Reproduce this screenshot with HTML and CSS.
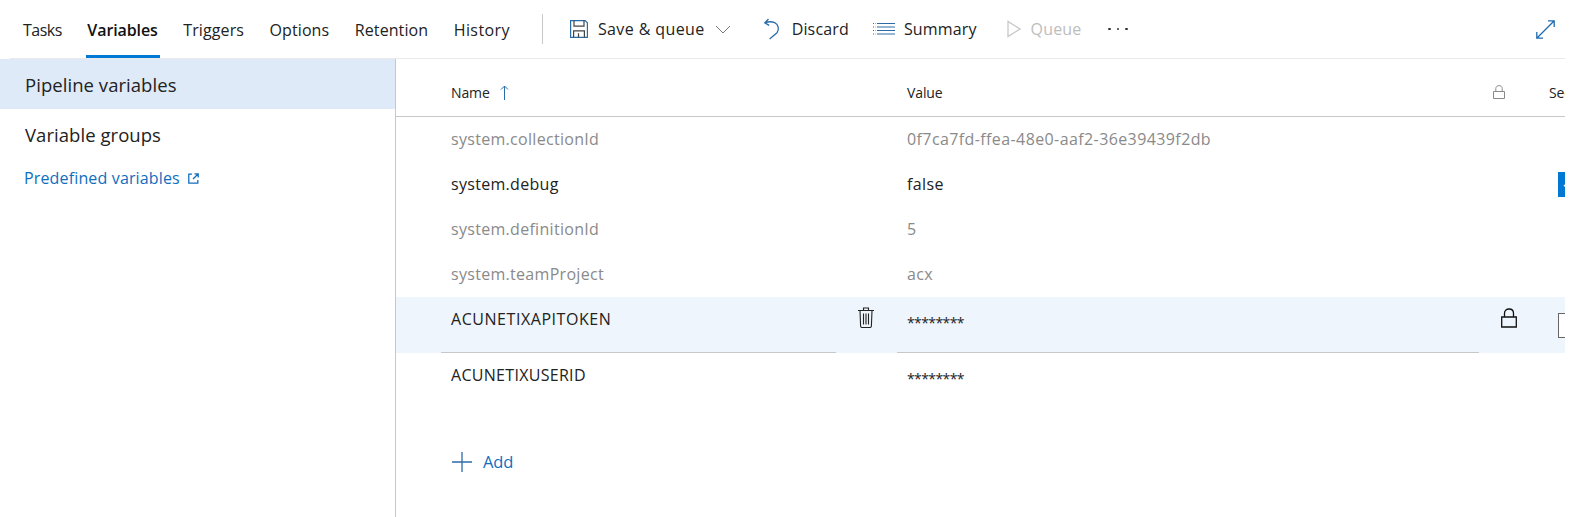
FILE: index.html
```html
<!DOCTYPE html>
<html lang="en">
<head>
<meta charset="utf-8">
<title>Variables</title>
<link rel="stylesheet" href="styles.css">
</head>
<body>
<div class="app">
  <header class="toolbar">
    <nav class="tabs">
      <a class="tab tasks">Tasks</a>
      <a class="tab active">Variables</a>
      <a class="tab">Triggers</a>
      <a class="tab">Options</a>
      <a class="tab">Retention</a>
      <a class="tab history">History</a>
    </nav>
    <div class="sep"></div>
    <div class="cmds">
      <button class="cmd save">
        <svg class="ic" width="20" height="20" viewBox="0 0 20 20" fill="none" stroke="#2b6ca8" stroke-width="1.2"><path d="M1.6 1.6h14.6l2.2 2.2v14.6H1.6z"/><path d="M5 1.6v5.600h10V1.600" stroke="#444"/><path d="M4.600 18.400v-6.600h10.800v6.600M9.500 14.200v4.200" stroke="#444"/></svg>
        <span>Save &amp; queue</span>
        <svg class="chev" width="16" height="9" viewBox="0 0 16 9" fill="none" stroke="#777" stroke-width="1"><path d="M1 1l7 7 7-7"/></svg>
      </button>
      <button class="cmd discard">
        <svg class="ic" width="18" height="22" viewBox="0 0 18 22" fill="none" stroke="#2b6ca8" stroke-width="1.3"><path d="M5.500 1L1.800 4.800l4.400 2.600M2 4.900c3-1.300 7-1.400 9.600-.2 4 1.900 4.800 6.600 2.400 10L6.600 21"/></svg>
        <span>Discard</span>
      </button>
      <button class="cmd summary">
        <svg class="ic" width="22" height="16" viewBox="0 0 22 16" fill="none" stroke="#2b6ca8" stroke-width="1.2"><path d="M4 2.500h18M4 6h18M4 9.500h18M4 13h18"/><path d="M0 2.500h2.500M0 6h2.500M0 9.500h2.500M0 13h2.500" stroke-dasharray="1 1"/></svg>
        <span>Summary</span>
      </button>
      <button class="cmd queue">
        <svg class="ic" width="14" height="18" viewBox="0 0 14 18" fill="none" stroke="#c8c8c8" stroke-width="1.3"><path d="M1 1.500v15L13 9z"/></svg>
        <span>Queue</span>
      </button>
      <button class="cmd more" aria-label="More">
        <span class="dot"></span><span class="dot"></span><span class="dot"></span>
      </button>
    </div>
    <button class="expand" aria-label="Expand">
      <svg width="19" height="19" viewBox="0 0 19 19" fill="none" stroke="#1f6bb0" stroke-width="1.300"><path d="M1 18L18 1M12 .8h6.200V7M.8 12v6.200H7"/></svg>
    </button>
  </header>

  <div class="main">
    <aside class="side">
      <div class="side-item selected">Pipeline variables</div>
      <div class="side-item">Variable groups</div>
      <a class="side-link">Predefined variables
        <svg width="11" height="11" viewBox="0 0 11 11" fill="none" stroke="#106ebe" stroke-width="1.300"><path d="M4 1.200H.8v9h9V7M5 6l5-5M6.500.8h3.700v3.700"/></svg>
      </a>
    </aside>

    <section class="table">
      <div class="row head">
        <div class="cell name">Name
          <svg class="sort" width="9" height="15" viewBox="0 0 9 15" fill="none" stroke="#2b6ca8" stroke-width="1"><path d="M4.500 15V1M1 4.500L4.500 1 8 4.500"/></svg>
        </div>
        <div></div>
        <div class="cell">Value</div>
        <div class="cell lockcell">
          <svg width="12" height="14" viewBox="0 0 12 14" fill="none" stroke="#8a8a8a" stroke-width="1"><path d="M.5 6.500h11v7H.5zM2.800 6.500V3.600C2.800 1.800 4.200.6 6 .6s3.200 1.200 3.200 3v2.900"/></svg>
        </div>
        <div class="cell">Secret</div>
      </div>

      <div class="row sys muted">
        <div class="cell name">system.collectionId</div><div></div>
        <div class="cell value">0f7ca7fd-ffea-48e0-aaf2-36e39439f2db</div><div></div><div></div>
      </div>
      <div class="row sys">
        <div class="cell name">system.debug</div><div></div>
        <div class="cell value">false</div><div></div>
        <div class="cell">
          <span class="toggle">
            <svg width="12" height="10" viewBox="0 0 12 10" fill="none" stroke="#fff" stroke-width="1.500"><path d="M1 5l3.500 3.500L11 1"/></svg>
          </span>
        </div>
      </div>
      <div class="row sys muted">
        <div class="cell name">system.definitionId</div><div></div>
        <div class="cell value">5</div><div></div><div></div>
      </div>
      <div class="row sys muted">
        <div class="cell name">system.teamProject</div><div></div>
        <div class="cell value">acx</div><div></div><div></div>
      </div>

      <div class="row edit hover">
        <div class="field token">ACUNETIXAPITOKEN</div>
        <div class="trash">
          <svg width="16" height="21" viewBox="0 0 16 21" fill="none" stroke="#222" stroke-width="1.100"><path d="M0 3.500h16M5.500 3.500V1h5v2.500M2 3.500l.6 15.500c0 1 .6 1.500 1.500 1.500h7.800c.9 0 1.500-.5 1.500-1.500l.6-15.500M5.500 6.500v11M8 6.500v11M10.500 6.500v11"/></svg>
        </div>
        <div class="field secret">********</div>
        <div class="lockcell bigl">
          <svg width="16" height="20" viewBox="0 0 16 20" fill="none" stroke="#111" stroke-width="1.300"><path d="M.7 9h14.600v10H.7zM3.500 9V5.200C3.500 2.600 5.400 1 8 1s4.500 1.600 4.500 4.200V9"/></svg>
        </div>
        <div class="cell"><span class="check"></span></div>
      </div>
      <div class="row edit">
        <div class="field plain">ACUNETIXUSERID</div>
        <div></div>
        <div class="field secret plain">********</div>
        <div></div><div></div>
      </div>

      <button class="add">
        <svg width="20" height="20" viewBox="0 0 20 20" fill="none" stroke="#2b6ca8" stroke-width="1.300"><path d="M10 0v20M0 10h20"/></svg>
        <span>Add</span>
      </button>
    </section>
  </div>
</div>
</body>
</html>
```
FILE: styles.css
```css
* { box-sizing: border-box; }
html, body { margin: 0; height: 100%; background: #fff; overflow: hidden; }
body { font-family: "Open Sans", "Noto Sans", sans-serif; color: #222; font-size: 16px; }
button { font: inherit; color: inherit; background: none; border: 0; padding: 0; display: flex; align-items: center; }

.app { width: 1565px; height: 517px; display: flex; flex-direction: column; }

.toolbar { height: 59px; margin-left: 10px; display: flex; align-items: center; border-bottom: 1px solid #eaeaea; flex: none; }
.tabs { display: flex; gap: 25.500px; padding-left: 13px; height: 58px; }
.tab { height: 58px; line-height: 60px; font-size: 16px; letter-spacing: .1px; position: relative; }
.tab.tasks { letter-spacing: -.5px; }
.tab.history { letter-spacing: .4px; }
.tab.active { font-weight: 600; color: #111; letter-spacing: -.1px; }
.tab.active::after { content: ""; position: absolute; left: -1px; right: -2px; bottom: 0; height: 3px; background: #0078d4; }
.sep { width: 1px; height: 30px; background: #c8c8c8; margin: 0 26px 0 32px; }

.cmds { display: flex; align-items: center; }
.cmd { font-size: 16px; letter-spacing: .15px; }
.save { letter-spacing: .4px; }
.save .ic { margin-right: 9px; }
.chev { margin-left: 10px; }
.discard { margin-left: 32px; }
.discard .ic { margin-right: 11px; }
.summary { margin-left: 24px; }
.summary .ic { margin-right: 9px; }
.queue { margin-left: 30px; color: #bdbdbd; }
.queue .ic { margin-right: 10px; }
.more { margin-left: 27px; gap: 6px; }
.dot { width: 2.500px; height: 2.500px; border-radius: 50%; background: #333; }
.expand { margin-left: auto; padding-right: 10px; }

.main { flex: 1; display: flex; min-height: 0; }
.side { width: 396px; flex: none; border-right: 1px solid #c8c8c8; }
.side-item { height: 50px; padding-left: 25px; line-height: 52px; font-size: 18.500px; letter-spacing: .05px; }
.side-item.selected { background: #deeaf7; }
.side-link { display: flex; align-items: center; gap: 8px; padding-left: 24px; margin-top: 7px; height: 24px; color: #106ebe; font-size: 16px; letter-spacing: .15px; }

.table { flex: 1; min-width: 0; overflow: hidden; }
.row { display: grid; grid-template-columns: 45px 395px 61px 582px 60px 1fr; }
.row::before { content: ""; }
.cell { display: flex; align-items: center; padding-left: 10px; white-space: nowrap; font-size: 16px; letter-spacing: .3px; min-width: 0; }
.cell.value { letter-spacing: .4px; }
.head { height: 58px; border-bottom: 1px solid #c8c8c8; }
.head .cell { font-size: 14px; letter-spacing: -.1px; padding-top: 9px; }
.sort { margin-left: 10px; }
.lockcell { padding-left: 14px; }
.sys { height: 45px; }
.sys .cell { padding-bottom: 2px; }
.muted { color: #8a8a8a; }
.toggle { width: 30px; height: 25px; background: #0078d4; margin-left: 9px; margin-top: 2px; flex: none; display: flex; align-items: center; padding-left: 5px; }
.check { width: 24px; height: 25px; border: 1px solid #666; margin-left: 9px; flex: none; background: #fff; }

.edit { height: 56px; }
.hover { background: #eef5fc; }
.field { font-size: 16px; letter-spacing: .3px; padding: 11px 0 0 10px; border-bottom: 1px solid #c8c8c8; white-space: nowrap; }
.field.token { letter-spacing: .55px; }
.field.plain { border-bottom-color: transparent; }
.secret { padding-top: 16px; font-size: 14px; letter-spacing: -.6px; }
.trash { display: flex; padding: 10px 0 0 22px; }
.bigl { display: flex; padding: 11px 0 0 22px; }

.add { margin: 41px 0 0 56px; color: #106ebe; gap: 11px; font-size: 16.500px; letter-spacing: -.2px; }
```
